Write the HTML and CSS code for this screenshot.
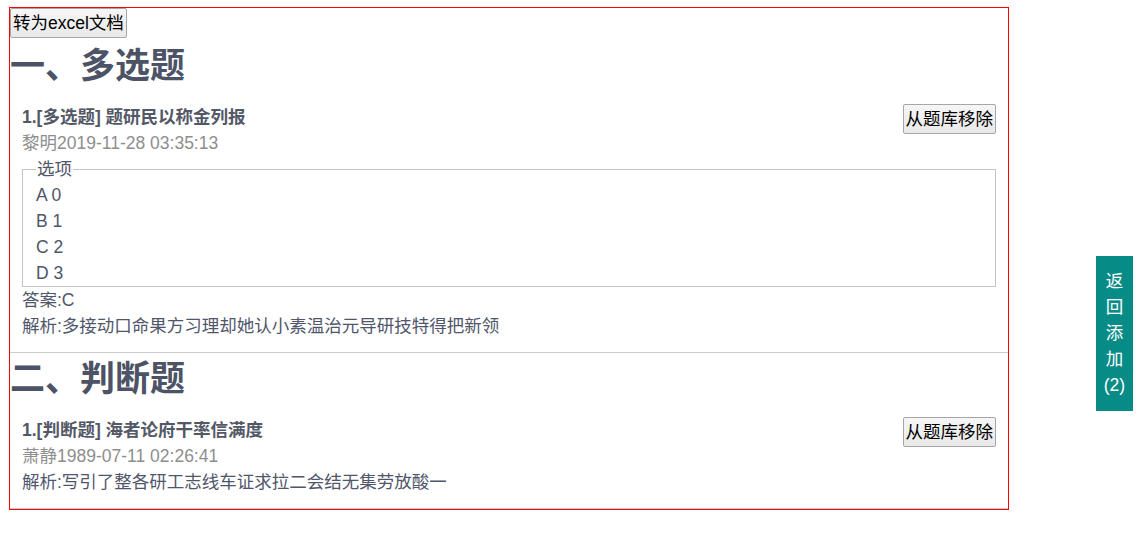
FILE: index.html
```html
<!DOCTYPE html>
<html lang="zh-CN">
<head>
<meta charset="utf-8">
<title>题库</title>
<link rel="stylesheet" href="styles.css">
</head>
<body>
<div class="paper">
  <div class="toolbar"><button class="btn">转为excel文档</button></div>
  <section class="group">
    <h1 class="group-title">一、多选题</h1>
    <div class="question">
      <button class="btn btn-remove">从题库移除</button>
      <div class="q-title">1.[多选题] 题研民以称金列报</div>
      <div class="q-meta">黎明2019-11-28 03:35:13</div>
      <fieldset class="options">
        <legend class="options-legend">选项</legend>
        <div class="option">A 0</div>
        <div class="option">B 1</div>
        <div class="option">C 2</div>
        <div class="option">D 3</div>
      </fieldset>
      <div class="q-line">答案:C</div>
      <div class="q-line">解析:多接动口命果方习理却她认小素温治元导研技特得把新领</div>
    </div>
  </section>
  <section class="group">
    <h1 class="group-title">二、判断题</h1>
    <div class="question">
      <button class="btn btn-remove">从题库移除</button>
      <div class="q-title">1.[判断题] 海者论府干率信满度</div>
      <div class="q-meta">萧静1989-07-11 02:26:41</div>
      <div class="q-line">解析:写引了整各研工志线车证求拉二会结无集劳放酸一</div>
    </div>
  </section>
</div>
<div class="back-btn">
  <span>返</span><span>回</span><span>添</span><span>加</span><span>(2)</span>
</div>
</body>
</html>
```

FILE: styles.css
```css
html, body {
  margin: 0;
  padding: 0;
  background: #ffffff;
}

body {
  font-family: "Liberation Sans", "Noto Sans CJK SC", sans-serif;
  font-size: 17.5px;
  color: #50566a;
}

.paper {
  width: 998px;
  margin: 7px 0 0 9px;
  border: 1px solid #ff0000;
}

.toolbar {
  display: flex;
  padding-bottom: 2px;
}

.btn {
  font-family: "Liberation Sans", "Noto Sans CJK SC", sans-serif;
  font-size: 17.5px;
  line-height: 24px;
  height: 30px;
  box-sizing: border-box;
  color: #000000;
  background: #efefef;
  border: 1px solid #a6a6a6;
  border-radius: 2px;
  padding: 2px 2px;
  margin: 0;
  background-image: linear-gradient(#f6f6f6, #e9e9e9);
}

.group {
  border-bottom: 1px solid #cccccc;
}

.group-title {
  margin: 6px 0 0 0;
  font-size: 35px;
  line-height: 40px;
  font-weight: bold;
  color: #4c5366;
}

.question {
  margin-top: 18px;
  padding: 0 12px 13px 12px;
}

.btn-remove {
  float: right;
}

.q-title {
  font-weight: bold;
  line-height: 26px;
  color: #535867;
}

.q-meta {
  line-height: 26px;
  color: #8e8e8e;
}

.options {
  margin: 0;
  padding: 0 12px 0 13px;
  border: 1px solid #c4c4c4;
}

.options-legend {
  padding: 0 1px;
  line-height: 26px;
  color: #50566a;
}

.option {
  line-height: 26px;
}

.q-line {
  line-height: 26px;
}

.back-btn {
  position: fixed;
  top: 256px;
  right: 12px;
  width: 37px;
  height: 155px;
  box-sizing: border-box;
  padding-top: 12px;
  background: #078b87;
  color: #ffffff;
  display: flex;
  flex-direction: column;
  align-items: center;
  line-height: 26px;
  font-size: 17.5px;
}
```
